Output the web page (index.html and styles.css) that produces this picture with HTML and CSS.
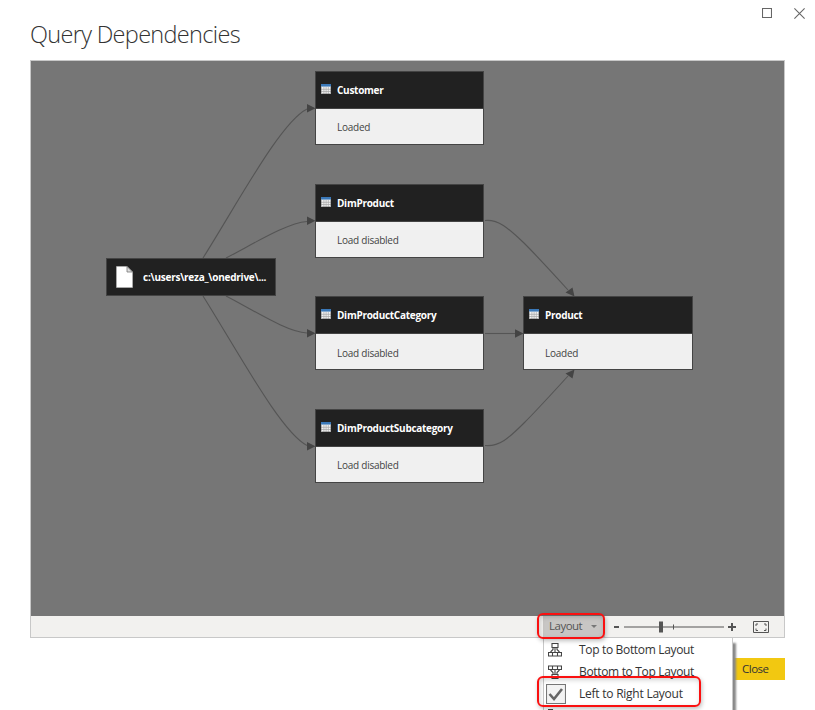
FILE: index.html
```html
<!DOCTYPE html>
<html lang="en">
<head>
<meta charset="utf-8">
<title>Query Dependencies</title>
<link rel="stylesheet" href="styles.css">
</head>
<body>
<svg class="defs" width="0" height="0" aria-hidden="true">
  <symbol id="table" viewBox="0 0 10 10">
    <path fill="#f4f4f4" d="M0 0h10v10H0z"/>
    <path fill="#3a78b8" d="M0 0h10v2.6H0z"/>
    <path fill="none" stroke="#a5a5a5" stroke-width=".7" d="M2.9 3v7M5.1 3v7M7.3 3v7M0 5.3h10M0 7.5h10"/>
    <path fill="none" stroke="#777" stroke-width=".6" d="M.3 2.6v7.1h9.4V2.6"/>
  </symbol>
</svg>
<div class="dialog">
  <header class="titlebar">
    <h1>Query Dependencies</h1>
    <div class="window-buttons">
      <svg width="10" height="10" viewBox="0 0 10 10"><path d="M.5.5h9v9h-9z"/></svg>
      <svg width="11" height="11" viewBox="0 0 11 11"><path d="M.4.4l10.2 10.2M10.6.4L.4 10.6"/></svg>
    </div>
  </header>

  <main class="panel">
    <div class="canvas">
      <svg class="edges" width="753" height="555" viewBox="31 61 753 555">
        <path d="M203 258C240 199 281 122 307 109"/>
        <path d="M226 258C255 243 287 223 307 221.5"/>
        <path d="M226 296C255 311 287 332 307 333"/>
        <path d="M203 296C240 355 281 432 307 445.5"/>
        <path d="M485 220.500C499 219 509 229 524 243Q538 257 568 290"/>
        <path d="M485 333.500H516"/>
        <path d="M485 445.500C499 447 509 438 524 423Q538 409 568 376"/>
        <g class="arrows">
          <path d="M307 104v8.500l8.500-4.200zM307 216.500v8.500l8.500-4.200zM307 329v8.500l8.500-4.200zM307 442v8.500l8.500-4.200zM515 329.200v8.500l8.500-4.200z"/>
          <path d="M565.500 292.500l7-5L574.500 296.500zM565.500 373.500l7 5L574.500 369.500z"/>
        </g>
      </svg>
      <section class="node source">
        <div class="node-head"><svg width="17" height="22" viewBox="0 0 17 22"><path fill="#fff" stroke="#bbb" stroke-width=".6" d="M.5.5H11l5.500 5.500v15.500H.5z"/><path fill="#ddd" stroke="#777" stroke-width=".8" d="M11 .5V6h5.500z"/></svg><b>c:\users\reza_\onedrive\...</b></div>
      </section>
      <section class="node customer">
        <div class="node-head"><svg width="10" height="10"><use href="#table"/></svg><b>Customer</b></div>
        <div class="node-body"><span>Loaded</span></div>
      </section>
      <section class="node dim-product">
        <div class="node-head"><svg width="10" height="10"><use href="#table"/></svg><b>DimProduct</b></div>
        <div class="node-body"><span>Load disabled</span></div>
      </section>
      <section class="node dim-category">
        <div class="node-head"><svg width="10" height="10"><use href="#table"/></svg><b>DimProductCategory</b></div>
        <div class="node-body"><span>Load disabled</span></div>
      </section>
      <section class="node dim-subcategory">
        <div class="node-head"><svg width="10" height="10"><use href="#table"/></svg><b>DimProductSubcategory</b></div>
        <div class="node-body"><span>Load disabled</span></div>
      </section>
      <section class="node product">
        <div class="node-head"><svg width="10" height="10"><use href="#table"/></svg><b>Product</b></div>
        <div class="node-body"><span>Loaded</span></div>
      </section>
    </div>
    <div class="toolbar">
      <div class="layout-button">
        <span>Layout</span><i class="caret"></i>
        <div class="menu">
          <div class="item"><svg width="14" height="14" viewBox="0 0 14 14"><path d="M4 .5h6v4H4zM.5 9.500h4v3.500h-4zM4.500 9.500h5v3.500h-5zM9.500 9.500h4v3.500h-4zM5 4.500v2L2.500 9M9 4.500v2L11.500 9M7 4.500v5"/></svg><span>Top to Bottom Layout</span></div>
          <div class="item"><svg width="14" height="14" viewBox="0 0 14 14"><path d="M4 9.500h6v4H4zM.5 1h4v3.500h-4zM4.500 1h5v3.500h-5zM9.500 1h4v3.500h-4zM5 9.500v-2L2.500 5M9 9.500v-2L11.500 5M7 9.500v-5"/></svg><span>Bottom to Top Layout</span></div>
          <div class="item checked"><svg width="20" height="20" viewBox="0 0 20 20"><path class="box" d="M.5.5h19v19H.5z"/><path class="tick" d="M3.500 10l4.500 5L16 5"/></svg><span>Left to Right Layout</span></div>
          <div class="item next"><svg width="14" height="14" viewBox="0 0 14 14"><path d="M.5.5h4v4h-4zM.5 5h4v4h-4zM9 4h4v5H9z"/></svg></div>
        </div>
      </div>
      <svg class="zoom" width="122" height="13" viewBox="0 0 122 13">
        <path d="M0 6h5v2H0zM10 6.500h100v1H10zM45 1.500h4v11h-4zM59 4.500h1v5h-1zM114 6h8v2h-8zM117 3h2v8h-2z"/>
      </svg>
      <svg class="fit" width="16" height="12" viewBox="0 0 16 12"><path d="M.5.5h15v11H.5zM3 5V3h2M11 3h2v2M3 7.500v2h2M11 9.500h2v-2"/></svg>
      <div class="mark mark-button"></div>
      <div class="mark mark-item"></div>
    </div>
  </main>
  <footer><button type="button">Close</button></footer>
</div>
</body>
</html>
```
FILE: styles.css
```css
* { box-sizing: border-box; }
body {
  margin: 0;
  width: 815px;
  height: 710px;
  overflow: hidden;
  background: #fff;
  color: #333;
  font-family: "Open Sans", "Noto Sans", sans-serif;
}
svg { display: block; flex: none; }
.defs { position: absolute; }
.dialog { height: 710px; padding: 0 30px; overflow: hidden; }
.titlebar { display: flex; justify-content: space-between; height: 60px; margin-right: -20px; }
h1 { margin: 17px 0 0; font-size: 23.500px; line-height: 34px; font-weight: 300; letter-spacing: -.68px; white-space: nowrap; }
.window-buttons { display: flex; gap: 22px; padding-top: 8px; }
.window-buttons svg { fill: none; stroke: #666; stroke-width: 1.1; }

.panel { width: 755px; height: 578px; border: 1px solid #c8c8c8; }
.canvas { position: relative; height: 555px; background: #767676; }
.edges { position: absolute; inset: 0; fill: none; stroke: #555; stroke-width: 1.1; }
.arrows { fill: #444; stroke: none; }
.node { position: absolute; width: 169px; height: 74px; border: 1px solid #444; background: #f0f0f0; }
.source { left: 75px; top: 197px; width: 170px; height: 38px; }
.customer { left: 284px; top: 10px; }
.dim-product { left: 284px; top: 123px; }
.dim-category { left: 284px; top: 235px; }
.dim-subcategory { left: 284px; top: 348px; }
.product { left: 492px; top: 235px; width: 170px; }
.node-head { display: flex; align-items: center; gap: 6px; height: 37px; padding-left: 5px; border-bottom: 1px solid #444; background: #212121; color: #fff; font-size: 10px; letter-spacing: -.28px; }
.node-head svg { margin-top: -2px; }
.node-head b { white-space: nowrap; }
.source .node-head { height: 36px; padding-left: 9px; gap: 10px; border: 0; letter-spacing: -.24px; }
.source .node-head svg { margin-top: 0; }
.node-body { display: flex; align-items: center; height: 36px; padding-left: 21px; font-size: 10px; letter-spacing: -.25px; color: #444; }
.dim-category .node-body, .product .node-body { padding-top: 2px; }

.toolbar { position: relative; display: flex; align-items: center; height: 21px; background: #f2f1ef; }
.layout-button { position: relative; display: flex; align-items: center; width: 62px; height: 21px; margin-left: 512px; padding-left: 6px; background: #c8c6c4; font-size: 11.500px; letter-spacing: -.5px; color: #555; }
.layout-button > span { width: 37px; margin-top: -2px; }
.caret { margin-left: 5px; border: 3px solid transparent; border-top-color: #777; border-bottom: 0; }
.zoom { margin-left: 9px; fill: #555; }
.fit { margin-left: 17px; fill: none; stroke: #555; }
.menu { position: absolute; z-index: 1; left: 0; top: 22px; width: 190px; height: 90px; border: 1px solid #c8c8c8; border-top: 0; background: #fff; box-shadow: 3px 5px 2px #888; color: #333; font-size: 12px; letter-spacing: -.33px; }
.item { display: flex; align-items: center; gap: 17px; height: 22px; padding-left: 4px; white-space: nowrap; }
.menu .item:first-child { margin-top: 1px; }
.item span { margin-top: -2px; }
.item svg { fill: none; stroke: #444; stroke-width: 1.1; }
.item.checked { padding-left: 2px; gap: 13px; letter-spacing: -.24px; }
.item .box { fill: #f3f3f3; stroke: #777; }
.item .tick { stroke: #666; stroke-width: 2.600; }
.item.next { align-items: flex-start; padding-top: 4px; }
.mark { position: absolute; z-index: 2; border: 2px solid #fa1010; border-radius: 6px; box-shadow: 1px 2px 4px rgba(0,0,0,.25), inset 1px 2px 5px rgba(0,0,0,.18); }
.mark-button { left: 506px; top: -3px; width: 68px; height: 26px; }
.mark-item { left: 506px; top: 60px; width: 164px; height: 31px; }
footer { display: flex; justify-content: flex-end; padding-top: 20px; }
button { width: 60px; height: 22px; margin: 0; padding: 0 0 2px 17px; border: 0; background: #f2c811; color: #333; font: 11.500px "Open Sans", "Noto Sans", sans-serif; letter-spacing: -.5px; text-align: left; }
```
